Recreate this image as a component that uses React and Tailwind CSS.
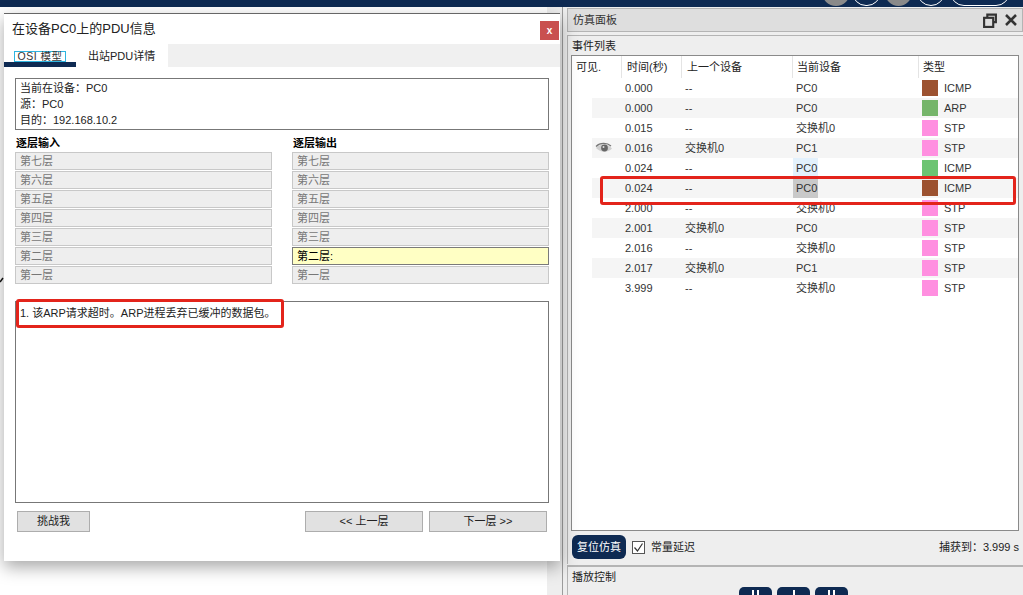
const layers = ['第七层', '第六层', '第五层', '第四层', '第三层', '第二层', '第一层'];

const events = [
  { time: '0.000', prev: '--', device: 'PC0', color: 'bg-[#9c5230]', type: 'ICMP' },
  { time: '0.000', prev: '--', device: 'PC0', color: 'bg-[#75b56a]', type: 'ARP' },
  { time: '0.015', prev: '--', device: '交换机0', color: 'bg-[#ff8fe0]', type: 'STP' },
  { time: '0.016', prev: '交换机0', device: 'PC1', color: 'bg-[#ff8fe0]', type: 'STP', eye: true },
  { time: '0.024', prev: '--', device: 'PC0', color: 'bg-[#6cc472]', type: 'ICMP', mark: 'bg-[#e3f1fc]' },
  { time: '0.024', prev: '--', device: 'PC0', color: 'bg-[#9c5230]', type: 'ICMP', mark: 'bg-[#c9c9c9]' },
  { time: '2.000', prev: '--', device: '交换机0', color: 'bg-[#ff8fe0]', type: 'STP' },
  { time: '2.001', prev: '交换机0', device: 'PC0', color: 'bg-[#ff8fe0]', type: 'STP' },
  { time: '2.016', prev: '--', device: '交换机0', color: 'bg-[#ff8fe0]', type: 'STP' },
  { time: '2.017', prev: '交换机0', device: 'PC1', color: 'bg-[#ff8fe0]', type: 'STP' },
  { time: '3.999', prev: '--', device: '交换机0', color: 'bg-[#ff8fe0]', type: 'STP' },
];

function EyeIcon() {
  return (
    <svg width="18" height="12" viewBox="0 0 18 12">
      <path d="M1 6C4 1.500 13 1 17 6.500C13 11 5 10.500 1 6Z" fill="#cfcfcf" />
      <path d="M1 4.500C5 0.500 12 0.500 16 4" fill="none" stroke="#777" strokeWidth="1.200" />
      <circle cx="9.500" cy="6" r="3.400" fill="#666" />
      <circle cx="8.500" cy="5" r="1" fill="#ddd" />
    </svg>
  );
}

function LayerColumn({ title, active }) {
  return (
    <div className="w-[257px]">
      <div className="h-[22px] pl-px pt-[5px] text-[11px] leading-[16px] font-bold text-black">{title}</div>
      <div className="flex flex-col gap-px">
        {layers.map((layer, i) => (
          <div
            key={layer}
            className={
              i === active
                ? 'h-[18px] border border-[#7a7a7a] bg-[#ffffc4] pl-1 text-[11px] leading-[16px] text-black'
                : 'h-[18px] border border-[#c8c8c8] bg-[#eeeeee] pl-1 text-[11px] leading-[16px] text-[#777777]'
            }
          >
            {i === active ? layer + ':' : layer}
          </div>
        ))}
      </div>
    </div>
  );
}

function PduDialog() {
  return (
    <div className="absolute left-[4px] top-[6px] flex h-[548px] w-[556px] flex-col border-t border-[#666666] bg-white shadow-[0_6px_16px_rgba(0,0,0,0.35)]">
      <div className="flex h-[30px] items-start justify-between">
        <div className="pl-2 pt-[6px] text-[13px] leading-[18px] text-[#222222]">在设备PC0上的PDU信息</div>
        <div className="mr-px mt-[7px] flex h-[19px] w-[19px] items-center justify-center bg-[#c9504f] text-[10px] font-bold leading-none text-white">x</div>
      </div>
      <div className="flex h-[23px]">
        <div className="h-[23px] w-[72px] border-b-[5px] border-[#0e2a52] pl-[10px] pt-[7px]">
          <div className="flex h-[11px] w-[52px] items-center justify-center border border-[#2fb5e0] text-[10.500px] leading-none tracking-[0.5px] text-[#333333]">OSI 模型</div>
        </div>
        <div className="w-[92px] pl-[12px] pt-[4px] text-[11px] leading-[16px] text-[#222222]">出站PDU详情</div>
        <div className="flex-1 bg-[#f0f0f0]" />
      </div>
      <div className="mx-[11px] mt-[11px] flex h-[52px] w-[534px] flex-col justify-center border border-[#777777] pl-1 text-[11px] leading-[16px] text-[#222222]">
        <div>当前在设备：PC0</div>
        <div>源：PC0</div>
        <div>目的：192.168.10.2</div>
      </div>
      <div className="mx-[11px] flex w-[534px] justify-between">
        <LayerColumn title="逐层输入" />
        <LayerColumn title="逐层输出" active={5} />
      </div>
      <div className="mx-[11px] mt-[17px] h-[202px] w-[534px] border border-[#777777] pl-1 pt-[3px] text-[11px] leading-[16px] text-[#222222]">
        1. 该ARP请求超时。ARP进程丢弃已缓冲的数据包。
      </div>
      <div className="mx-[13px] mt-[8px] flex items-start justify-between">
        <button className="h-[21px] w-[73px] border border-[#adadad] bg-[#e1e1e1] text-[11px] text-[#222222]">挑战我</button>
        <div className="flex gap-[6px]">
          <button className="h-[21px] w-[118px] border border-[#adadad] bg-[#e1e1e1] text-[11px] text-[#222222]">{'<< 上一层'}</button>
          <button className="h-[21px] w-[118px] border border-[#adadad] bg-[#e1e1e1] text-[11px] text-[#222222]">{'下一层 >>'}</button>
        </div>
      </div>
    </div>
  );
}

function EventTable() {
  return (
    <div className="h-[476px] w-[448px] border border-[#8a8a8a] bg-white">
      <div className="grid h-[22px] grid-cols-[50px_60px_111px_126px_1fr] text-[11px] leading-[22px] text-[#222222]">
        <div className="border-r border-[#e4e4e4] pl-[4px]">可见.</div>
        <div className="border-r border-[#e4e4e4] pl-[5px]">时间(秒)</div>
        <div className="border-r border-[#e4e4e4] pl-[5px]">上一个设备</div>
        <div className="border-r border-[#e4e4e4] pl-[4px]">当前设备</div>
        <div className="pl-[4px]">类型</div>
      </div>
      {events.map((row, i) => (
        <div key={i} className="pl-[20px]">
          <div
            className={
              (i % 2 === 1 ? 'bg-[#f5f5f5] ' : 'bg-white ') +
              'grid h-[20px] grid-cols-[30px_60px_111px_126px_1fr] items-center text-[11px] leading-[20px] text-[#333333]'
            }
          >
            <div className="flex items-center pl-[3px]">{row.eye && <EyeIcon />}</div>
            <div className="pl-[3px]">{row.time}</div>
            <div className="pl-[3px]">{row.prev}</div>
            <div>
              <span className={(row.mark || '') + ' inline-block h-[20px] min-w-[25px] pl-[3px]'}>{row.device}</span>
            </div>
            <div className="flex items-center pl-[3px]">
              <span className={row.color + ' h-[16px] w-[16px]'} />
              <span className="ml-[6px]">{row.type}</span>
            </div>
          </div>
        </div>
      ))}
    </div>
  );
}

function SimPanel() {
  return (
    <div className="flex h-full flex-1 flex-col bg-[#eeeeee]">
      <div className="ml-[15px] flex h-full flex-col border-l border-[#9c9c9c] pl-[4px]">
        <div className="mt-[1px] flex h-[24px] shrink-0 items-center justify-between border border-[#b4b4b4] bg-[#dedede] pl-[5px] pr-[5px] text-[11px] text-[#333333]">
          <span>仿真面板</span>
          <span className="flex items-center gap-[8px]">
            <svg width="14" height="15" viewBox="0 0 13 14" fill="none" stroke="#333" strokeWidth="2">
              <path d="M4 4V1.500H12V8.500H9.500" />
              <rect x="1" y="4.500" width="8.500" height="8.500" />
            </svg>
            <svg width="12" height="12" viewBox="0 0 12 12" stroke="#333" strokeWidth="2.500">
              <path d="M1 1L11 11M11 1L1 11" />
            </svg>
          </span>
        </div>
        <div className="mt-[3px] h-[529px] shrink-0 border-t border-l border-[#b4b4b4] pl-[3px]">
          <div className="h-[19px] pl-[1px] pt-[2px] text-[11px] leading-[16px] text-[#222222]">事件列表</div>
          <EventTable />
          <div className="flex h-[32px] items-center pr-[4px]">
            <button className="ml-[1px] h-[24px] w-[54px] rounded-[6px] bg-[#0e2a52] text-[11px] text-white">复位仿真</button>
            <span className="ml-[6px] flex h-[13px] w-[13px] items-center justify-center border border-[#555555] bg-white">
              <svg width="11" height="11" viewBox="0 0 11 11" fill="none" stroke="#333" strokeWidth="1.200">
                <path d="M1.500 5.500L4.500 9L9.500 1.500" />
              </svg>
            </span>
            <span className="ml-[6px] text-[11px] text-[#222222]">常量延迟</span>
            <span className="ml-auto text-[11px] text-[#222222]">捕获到：3.999 s</span>
          </div>
        </div>
        <div className="mt-px min-h-0 flex-1 overflow-hidden border-t-2 border-l border-[#b4b4b4] pl-[4px]">
          <div className="h-[20px] pt-[2px] text-[11px] leading-[16px] text-[#222222]">播放控制</div>
          <div className="ml-[167px] flex gap-[5px]">
            {[0, 1, 2].map((n) => (
              <div key={n} className="flex h-[24px] w-[33px] justify-center gap-[3px] rounded-[5px] bg-[#0e2a52] pt-[3px]">
                <span className="h-[7px] w-[2px] bg-white" />
                {n !== 1 && <span className="h-[7px] w-[2px] bg-white" />}
              </div>
            ))}
          </div>
        </div>
      </div>
    </div>
  );
}

export default function App() {
  return (
    <div className="relative flex h-[595px] w-[1023px] flex-col overflow-hidden bg-white font-['Liberation_Sans','Noto_Sans_CJK_SC',sans-serif]">
      <div className="flex h-[7px] shrink-0 items-end overflow-hidden bg-[#0e2a52] pb-[1px] pl-[822px]">
        <span className="h-[28px] w-[28px] shrink-0 rounded-full bg-[#8a8a8a]" />
        <span className="ml-[2px] h-[28px] w-[29px] shrink-0 rounded-full border border-white" />
        <span className="ml-[4px] h-[28px] w-[27px] shrink-0 rounded-full bg-[#8a8a8a]" />
        <span className="ml-[5px] h-[28px] w-[28px] shrink-0 rounded-full border border-white" />
        <span className="ml-[5px] h-[28px] w-[60px] shrink-0 rounded-full border border-white" />
      </div>
      <div className="relative flex min-h-0 flex-1">
        <div className="h-full w-[547px] shrink-0 bg-white" />
        <SimPanel />
        <PduDialog />
        <svg className="absolute left-0 top-[268px]" width="4" height="8" viewBox="0 0 4 8" stroke="#111" strokeWidth="1.500">
          <path d="M0 7L3 3" />
        </svg>
      </div>
      <div className="absolute left-[16px] top-[299px] h-[29px] w-[268px] rounded-[3px] border-[3px] border-[#e3241b]" />
      <div className="absolute left-[600px] top-[176px] h-[29px] w-[416px] rounded-[3px] border-[3px] border-[#e3241b]" />
    </div>
  );
}
